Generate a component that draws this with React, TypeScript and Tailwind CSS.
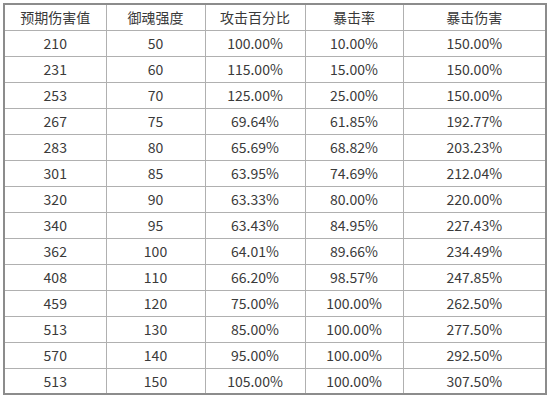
import React from 'react';

const headers = ['预期伤害值', '御魂强度', '攻击百分比', '暴击率', '暴击伤害'];

const rows: string[][] = [
  ['210', '50', '100.00%', '10.00%', '150.00%'],
  ['231', '60', '115.00%', '15.00%', '150.00%'],
  ['253', '70', '125.00%', '25.00%', '150.00%'],
  ['267', '75', '69.64%', '61.85%', '192.77%'],
  ['283', '80', '65.69%', '68.82%', '203.23%'],
  ['301', '85', '63.95%', '74.69%', '212.04%'],
  ['320', '90', '63.33%', '80.00%', '220.00%'],
  ['340', '95', '63.43%', '84.95%', '227.43%'],
  ['362', '100', '64.01%', '89.66%', '234.49%'],
  ['408', '110', '66.20%', '98.57%', '247.85%'],
  ['459', '120', '75.00%', '100.00%', '262.50%'],
  ['513', '130', '85.00%', '100.00%', '277.50%'],
  ['570', '140', '95.00%', '100.00%', '292.50%'],
  ['513', '150', '105.00%', '100.00%', '307.50%'],
];

// column widths taken from the grid lines in the picture
const colWidths = ['w-[102px]', 'w-[99px]', 'w-[100px]', 'w-[98px]', 'w-[143px]'];

export default function App() {
  return (
    <div className="w-[550px] h-[400px] bg-white pt-[3px] pl-[3px] font-['Noto_Sans_CJK_SC','Noto_Sans',sans-serif] text-[14px] text-[#3a3a3a]">
      <table className="border-collapse border-2 border-[#8c8c8c] table-fixed w-[542px]">
        <colgroup>
          {colWidths.map((w, i) => (
            <col key={i} className={w} />
          ))}
        </colgroup>
        <thead>
          <tr className="h-[26px]">
            {headers.map((h) => (
              <th key={h} className="border border-[#b0b0b0] font-normal text-center p-0 leading-none">
                {h}
              </th>
            ))}
          </tr>
        </thead>
        <tbody>
          {rows.map((r, i) => (
            <tr key={i} className="h-[26px]">
              {r.map((c, j) => (
                <td key={j} className="border border-[#b0b0b0] text-center p-0 leading-none">
                  {c}
                </td>
              ))}
            </tr>
          ))}
        </tbody>
      </table>
    </div>
  );
}
